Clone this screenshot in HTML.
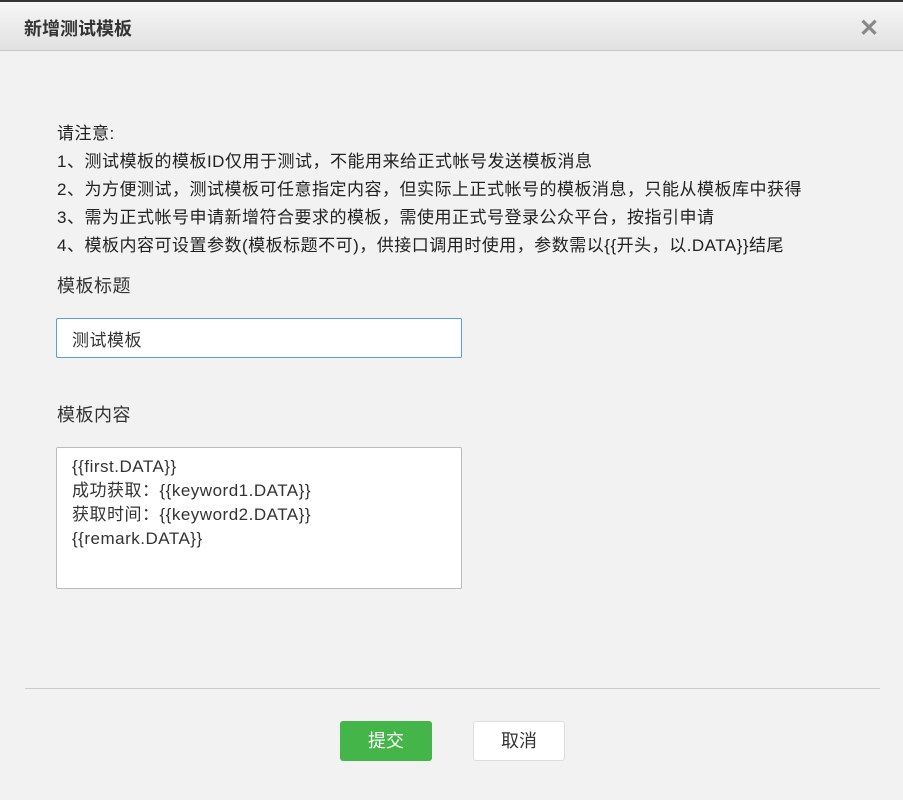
<!DOCTYPE html>
<html><head><meta charset="utf-8"><style>
*{margin:0;padding:0;box-sizing:border-box}
body{width:903px;height:800px;background:#f2f2f2;font-family:"Liberation Sans","Noto Sans CJK SC",sans-serif;color:#333;position:relative;overflow:hidden}
.top{position:absolute;left:0;top:0;width:903px;height:2px;background:#333}
.hd{position:absolute;left:0;top:2px;width:903px;height:49px;background:linear-gradient(#f6f6f6,#e1e1e1);border-bottom:1px solid #c8c8c8}
.hd .t{position:absolute;left:24px;top:13px;font-size:18px;font-weight:bold;color:#333}
.hd .x{position:absolute;left:859px;top:15px;font-size:24px;font-weight:bold;color:#888;line-height:24px}
.n{position:absolute;left:57px;top:120px;font-size:17px;letter-spacing:0.5px;line-height:28px;color:#222}
.lb{position:absolute;left:57px;font-size:18px;letter-spacing:0.5px;color:#333}
.in{position:absolute;left:56px;top:318px;width:406px;height:40px;background:#fff;border:1px solid #5b9ee0;border-radius:2px;font-size:17px;letter-spacing:0.5px;padding:7px 15px}
.ta{position:absolute;left:56px;top:447px;width:406px;height:142px;background:#fff;border:1px solid #bbb;border-radius:2px;font-size:17px;letter-spacing:0.5px;line-height:24px;padding:7px 15px;color:#333}
.hr{position:absolute;left:25px;top:688px;width:855px;height:1px;background:#ccc}
.b{position:absolute;top:721px;width:92px;height:40px;border-radius:3px;font-size:18px;text-align:center;line-height:40px}
.ok{left:340px;background:#44b549;color:#fff}
.no{left:473px;background:#fff;border:1px solid #ddd;line-height:38px;color:#333}
</style></head><body>
<div class="top"></div>
<div class="hd"><div class="t">新增测试模板</div><div class="x">✕</div></div>
<div class="n">请注意:<br>1、测试模板的模板ID仅用于测试，不能用来给正式帐号发送模板消息<br>2、为方便测试，测试模板可任意指定内容，但实际上正式帐号的模板消息，只能从模板库中获得<br>3、需为正式帐号申请新增符合要求的模板，需使用正式号登录公众平台，按指引申请<br>4、模板内容可设置参数(模板标题不可)，供接口调用时使用，参数需以{{开头，以.DATA}}结尾</div>
<div class="lb" style="top:272px">模板标题</div>
<div class="in">测试模板</div>
<div class="lb" style="top:401px">模板内容</div>
<div class="ta">{{first.DATA}}<br>成功获取：{{keyword1.DATA}}<br>获取时间：{{keyword2.DATA}}<br>{{remark.DATA}}</div>
<div class="hr"></div>
<div class="b ok">提交</div>
<div class="b no">取消</div>
</body></html>
